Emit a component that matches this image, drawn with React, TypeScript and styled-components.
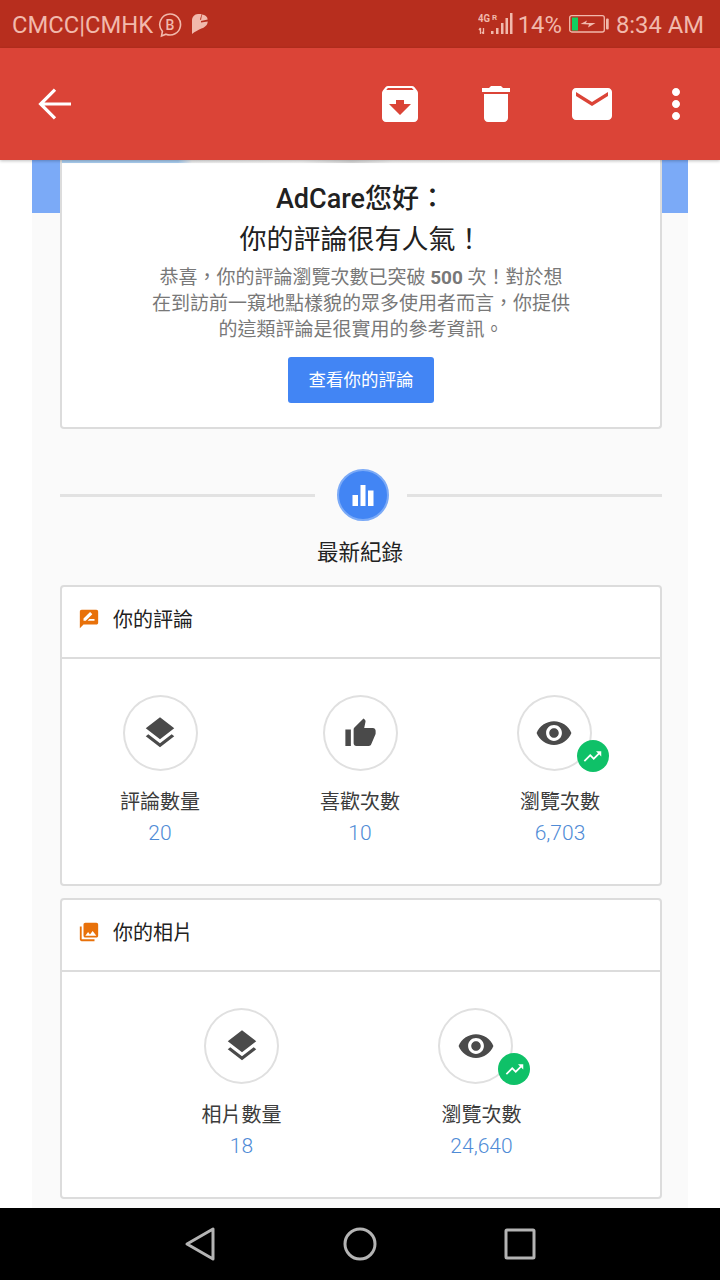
import React from 'react';
import styled, { createGlobalStyle } from 'styled-components';

const GlobalStyle = createGlobalStyle`
  html, body {
    margin: 0;
    padding: 0;
    background: #fff;
  }
  * {
    box-sizing: border-box;
  }
`;

const Screen = styled.div`
  width: 720px;
  height: 1280px;
  display: flex;
  flex-direction: column;
  overflow: hidden;
  font-family: Roboto, "Noto Sans CJK TC", sans-serif;
`;

const StatusBar = styled.div`
  height: 48px;
  flex: none;
  display: flex;
  align-items: center;
  padding: 2px 16px 0 12px;
  background: #b72e1e;
  color: #f1b9ac;
  font-size: 23.8px;
`;

const StatusGroup = styled.div`
  display: flex;
  align-items: center;
`;

const Spacer = styled.div`
  flex: 1;
`;

const AppBar = styled.div`
  height: 112px;
  flex: none;
  display: flex;
  align-items: center;
  padding: 0 8px 0 7px;
  background: #db4437;
  box-shadow: 0 1px 3px rgba(0, 0, 0, 0.25);
  position: relative;
  z-index: 1;
`;

const BarButton = styled.div<{ $width?: number }>`
  width: ${props => props.$width || 96}px;
  display: flex;
  justify-content: center;
  svg {
    display: block;
    fill: #fff;
  }
`;

const Main = styled.div`
  flex: 1;
  min-height: 0;
  overflow: hidden;
  padding: 0 32px;
  background: #fff;
`;

const Column = styled.div`
  height: 100%;
  padding: 0 26px 0 28px;
  background: linear-gradient(#7baaf7 53px, #fafafa 53px);
`;

const Card = styled.div`
  background: #fff;
  border: 2px solid #dcdcdc;
  border-radius: 4px;
  margin-bottom: 12px;
`;

const HeroCard = styled(Card)`
  border-top: none;
  border-radius: 0 0 4px 4px;
  margin-bottom: 0;
  padding-bottom: 24px;
  text-align: center;
`;

const HeroStrip = styled.div`
  height: 3px;
  background: linear-gradient(90deg, #a9cdf0 0 116px, #eeeeee 130px, #f4f4f4 240px, #d8d8d8 290px, #f4f4f4 330px, #fff 100%);
`;

const HeroTitle = styled.div`
  padding-top: 16px;
  font-size: 27px;
  line-height: 41px;
  font-weight: 500;
  color: #212121;
`;

const HeroTitleSub = styled.span`
  font-weight: 400;
`;

const HeroText = styled.div`
  margin-top: 4px;
  font-size: 19px;
  line-height: 26px;
  color: #787878;
  b {
    font-weight: 700;
  }
`;

const HeroButton = styled.div`
  width: 146px;
  height: 46px;
  margin: 14px auto 0;
  padding-bottom: 3px;
  display: flex;
  align-items: center;
  justify-content: center;
  background: #4285f4;
  border-radius: 3px;
  color: #fff;
  font-size: 17.5px;
`;

const DividerRow = styled.div`
  display: flex;
  align-items: center;
  margin-top: 40px;
`;

const DividerLine = styled.div`
  flex: 1;
  height: 3px;
  background: #e2e2e2;
`;

const DividerCircle = styled.div`
  width: 52px;
  height: 52px;
  margin: 0 18px 0 22px;
  border-radius: 50%;
  background: #4285f4;
  border: 2px solid #7baaf7;
  display: flex;
  align-items: center;
  justify-content: center;
`;

const SectionTitle = styled.div`
  margin: 17px 2px 17px 0;
  text-align: center;
  font-size: 21.5px;
  line-height: 30px;
  color: #222;
`;

const CardHeader = styled.div`
  height: 72px;
  display: flex;
  align-items: center;
  gap: 13px;
  padding: 0 0 7px 16px;
  border-bottom: 2px solid #dcdcdc;
  font-size: 20px;
  color: #212121;
`;

const StatRow = styled.div<{ $shift: number }>`
  display: flex;
  justify-content: center;
  padding: 36px ${props => (props.$shift < 0 ? 2 : 0)}px 36px ${props => (props.$shift > 0 ? 1 : 0)}px;
`;

const Stat = styled.div<{ $width: number }>`
  flex: none;
  width: ${props => props.$width}px;
  display: flex;
  flex-direction: column;
  align-items: center;
`;

const StatCircle = styled.div<{ $trending?: boolean }>`
  position: relative;
  width: 75px;
  height: 76px;
  margin-right: ${props => (props.$trending ? 12 : 0)}px;
  border: 2px solid #e0e0e0;
  border-radius: 50%;
  display: flex;
  align-items: center;
  justify-content: center;
  svg {
    fill: #4a4a4a;
    display: block;
  }
`;

const TrendBadge = styled.div`
  position: absolute;
  right: -19px;
  bottom: -3px;
  width: 32px;
  height: 32px;
  border-radius: 50%;
  background: #0fc168;
  display: flex;
  align-items: center;
  justify-content: center;
  svg {
    fill: #fff;
  }
`;

const StatLabel = styled.div`
  margin-top: 17px;
  font-size: 20px;
  line-height: 28px;
  color: #3c3c3c;
`;

const StatValue = styled.div`
  margin-top: 2px;
  font-size: 21px;
  font-weight: 300;
  line-height: 30px;
  color: #4f8bd6;
`;

const NavBar = styled.div`
  height: 72px;
  flex: none;
  display: flex;
  align-items: center;
  justify-content: center;
  gap: 100px;
  background: #000;
  svg {
    display: block;
    fill: none;
    stroke: #b4b4b4;
    stroke-width: 3;
    stroke-linejoin: round;
  }
`;

const paths = {
  archive:
    'M20.54 5.23l-1.39-1.68C18.88 3.21 18.47 3 18 3H6c-.47 0-.88.21-1.16.55L3.46 5.23C3.17 5.57 3 6.02 3 6.5V19c0 1.1.9 2 2 2h14c1.1 0 2-.9 2-2V6.5c0-.48-.17-.93-.46-1.27zM12 17.5L6.5 12H10v-2h4v2h3.5L12 17.5zM5.12 5l.81-1h12l.94 1H5.12z',
  trash: 'M6 19c0 1.1.9 2 2 2h8c1.1 0 2-.9 2-2V7H6v12zM19 4h-3.5l-1-1h-5l-1 1H5v2h14V4z',
  mail: 'M20 4H4c-1.1 0-1.99.9-1.99 2L2 18c0 1.1.9 2 2 2h16c1.1 0 2-.9 2-2V6c0-1.1-.9-2-2-2zm0 4l-8 5-8-5V6l8 5 8-5v2z',
  more: 'M12 8c1.1 0 2-.9 2-2s-.9-2-2-2-2 .9-2 2 .9 2 2 2zm0 2c-1.1 0-2 .9-2 2s.9 2 2 2 2-.9 2-2-.9-2-2-2zm0 6c-1.1 0-2 .9-2 2s.9 2 2 2 2-.9 2-2-.9-2-2-2z',
  layers:
    'M11.99 18.54l-7.37-5.73L3 14.07l9 7 9-7-1.63-1.27-7.38 5.74zM12 16l7.36-5.73L21 9l-9-7-9 7 1.63 1.27L12 16z',
  thumb:
    'M1 21h4V9H1v12zm22-11c0-1.1-.9-2-2-2h-6.31l.95-4.57.03-.32c0-.41-.17-.79-.44-1.06L14.17 1 7.59 7.59C7.22 7.95 7 8.45 7 9v10c0 1.1.9 2 2 2h9c.83 0 1.54-.5 1.8-1.22l3.02-7.05c.08-.23.18-.47.18-.73v-2z',
  eye: 'M12 4.5C7 4.5 2.73 7.61 1 12c1.73 4.39 6 7.5 11 7.5s9.27-3.11 11-7.5c-1.73-4.39-6-7.5-11-7.5zM12 17c-2.76 0-5-2.24-5-5s2.24-5 5-5 5 2.24 5 5-2.24 5-5 5zm0-8c-1.66 0-3 1.34-3 3s1.34 3 3 3 3-1.34 3-3-1.34-3-3-3z',
  trend: 'M16 6l2.29 2.29-4.88 4.88-4-4L2 16.59 3.41 18l6-6 4 4 6.3-6.29L22 12V6z',
  review:
    'M20 2H4c-1.1 0-1.99.9-1.99 2L2 22l4-4h14c1.1 0 2-.9 2-2V4c0-1.1-.9-2-2-2zM6 14v-2.47l6.88-6.88c.2-.2.51-.2.71 0l1.77 1.77c.2.2.2.51 0 .71L8.47 14H6zm12 0h-7.5l2-2H18v2z',
  photos:
    'M22 16V4c0-1.1-.9-2-2-2H8c-1.1 0-2 .9-2 2v12c0 1.1.9 2 2 2h12c1.1 0 2-.9 2-2zm-11-4l2.03 2.71L16 11l4 5H8l3-4zM2 6v14c0 1.1.9 2 2 2h14v-2H4V6H2z',
};

const Icon: React.FC<{ d: string; size: number; color?: string }> = ({ d, size, color }) => (
  <svg width={size} height={size} viewBox="0 0 24 24" style={color ? { fill: color } : undefined}>
    <path d={d} />
  </svg>
);

const BackIcon = () => (
  <svg width="48" height="48" viewBox="0 0 24 24">
    <path d="M20 12H5.200M12 4.800L4.800 12l7.200 7.200" fill="none" stroke="#fff" strokeWidth="1.600" />
  </svg>
);

const BusinessIcon = () => (
  <svg width="24" height="26" viewBox="0 0 24 26" style={{ marginLeft: 5 }}>
    <path
      d="M12 2a10.500 10.500 0 1 1-4 20.200L3.500 24l.9-4.600A10.500 10.500 0 0 1 12 2z"
      fill="none"
      stroke="#f1b9ac"
      strokeWidth="1.600"
    />
    <text x="12" y="18" textAnchor="middle" fontSize="14" fontWeight="500" fill="#f1b9ac">B</text>
  </svg>
);

const LeafIcon = () => (
  <svg width="16" height="20" viewBox="0 0 16 20" style={{ marginLeft: 10, marginBottom: 2 }}>
    <path
      d="M0 20V6.500C0 3 2.500 0 6 0h3.600L8 5.500 9 6l1-5.600C13 .8 15.500 2.500 15.700 5.500L9 7v1.600l6.700-1.200C15.600 11 13 13 10 14.300 6 16 3 17.800 0 20z"
      fill="#f1b9ac"
    />
  </svg>
);

const SignalIcon = () => (
  <svg width="36" height="21" viewBox="0 0 36 21" style={{ marginRight: 4, marginBottom: 3 }}>
    <text x="0" y="9" fontSize="11" fontWeight="700" fill="#f1b9ac" textLength="12" lengthAdjust="spacingAndGlyphs">4G</text>
    <text x="14" y="7" fontSize="8" fontWeight="700" fill="#f1b9ac">R</text>
    <path d="M2.500 21v-6M1 17l1.500-2M5.500 15v6M4 19l1.500 2" stroke="#f1b9ac" strokeWidth="1.300" fill="none" />
    <rect x="13" y="18" width="2.500" height="3" fill="#f1b9ac" />
    <rect x="18" y="15" width="2.500" height="6" fill="#f1b9ac" />
    <rect x="23" y="10" width="2.500" height="11" fill="#f1b9ac" />
    <rect x="27.500" y="5" width="2.500" height="16" fill="#f1b9ac" />
    <rect x="32" y="0" width="2.500" height="21" fill="#f1b9ac" />
  </svg>
);

const BatteryIcon = () => (
  <svg width="41" height="18" viewBox="0 0 41 18" style={{ margin: '0 6px 3px 7px' }}>
    <rect x="0.700" y="0.700" width="34.600" height="16.300" rx="2" fill="none" stroke="#f1b9ac" strokeWidth="1.300" />
    <rect x="3" y="2.500" width="6" height="13" fill="#10d060" />
    <path d="M11.500 9l6.500-3.500-1 2.500h9.500L19 12.500l1-3z" fill="#f1b9ac" />
    <rect x="37" y="3.500" width="2.700" height="11" rx="1" fill="#f1b9ac" />
  </svg>
);

const BarsIcon = () => (
  <svg width="24" height="24" viewBox="0 0 24 24">
    <rect x="1.500" y="12" width="5.500" height="11" fill="#fff" />
    <rect x="9.500" y="2" width="5" height="21" fill="#fff" />
    <rect x="17" y="7.500" width="5.500" height="15.500" fill="#fff" />
  </svg>
);

interface StatItem {
  icon: string;
  size: number;
  label: string;
  value: string;
  trending?: boolean;
}

const reviewStats: StatItem[] = [
  { icon: paths.layers, size: 38, label: '評論數量', value: '20' },
  { icon: paths.thumb, size: 33, label: '喜歡次數', value: '10' },
  { icon: paths.eye, size: 38, label: '瀏覽次數', value: '6,703', trending: true },
];

const photoStats: StatItem[] = [
  { icon: paths.layers, size: 38, label: '相片數量', value: '18' },
  { icon: paths.eye, size: 38, label: '瀏覽次數', value: '24,640', trending: true },
];

const StatCard: React.FC<{ icon: string; title: string; stats: StatItem[]; width: number; shift: number }> = ({
  icon,
  title,
  stats,
  width,
  shift,
}) => (
  <Card>
    <CardHeader>
      <Icon d={icon} size={22} color="#e8710a" />
      {title}
    </CardHeader>
    <StatRow $shift={shift}>
      {stats.map(stat => (
        <Stat key={stat.label} $width={width}>
          <StatCircle $trending={stat.trending}>
            <Icon d={stat.icon} size={stat.size} />
            {stat.trending && (
              <TrendBadge>
                <Icon d={paths.trend} size={21} />
              </TrendBadge>
            )}
          </StatCircle>
          <StatLabel>{stat.label}</StatLabel>
          <StatValue>{stat.value}</StatValue>
        </Stat>
      ))}
    </StatRow>
  </Card>
);

const App: React.FC = () => (
  <Screen>
    <GlobalStyle />
    <StatusBar>
      <StatusGroup>
        CMCC|CMHK
        <BusinessIcon />
        <LeafIcon />
      </StatusGroup>
      <Spacer />
      <StatusGroup>
        <SignalIcon />
        14%
        <BatteryIcon />
        8:34 AM
      </StatusGroup>
    </StatusBar>
    <AppBar>
      <BarButton>
        <BackIcon />
      </BarButton>
      <Spacer />
      <BarButton>
        <Icon d={paths.archive} size={48} />
      </BarButton>
      <BarButton>
        <Icon d={paths.trash} size={48} />
      </BarButton>
      <BarButton>
        <Icon d={paths.mail} size={48} />
      </BarButton>
      <BarButton $width={72}>
        <Icon d={paths.more} size={48} />
      </BarButton>
    </AppBar>
    <Main>
      <Column>
        <HeroCard>
          <HeroStrip />
          <HeroTitle>
            AdCare您好：
            <br />
            <HeroTitleSub>你的評論很有人氣！</HeroTitleSub>
          </HeroTitle>
          <HeroText>
            恭喜，你的評論瀏覽次數已突破 <b>500</b> 次！對於想
            <br />
            在到訪前一窺地點樣貌的眾多使用者而言，你提供
            <br />
            的這類評論是很實用的參考資訊。
          </HeroText>
          <HeroButton>查看你的評論</HeroButton>
        </HeroCard>
        <DividerRow>
          <DividerLine />
          <DividerCircle>
            <BarsIcon />
          </DividerCircle>
          <DividerLine />
        </DividerRow>
        <SectionTitle>最新紀錄</SectionTitle>
        <StatCard icon={paths.review} title="你的評論" stats={reviewStats} width={200} shift={-1} />
        <StatCard icon={paths.photos} title="你的相片" stats={photoStats} width={240} shift={1} />
      </Column>
    </Main>
    <NavBar>
      <svg width="60" height="40" viewBox="0 0 60 40">
        <path d="M43 5v30L17 20z" />
      </svg>
      <svg width="60" height="40" viewBox="0 0 60 40">
        <circle cx="30" cy="20" r="15" />
      </svg>
      <svg width="60" height="40" viewBox="0 0 60 40">
        <rect x="16" y="6" width="28" height="28" rx="1" />
      </svg>
    </NavBar>
  </Screen>
);

export default App;
